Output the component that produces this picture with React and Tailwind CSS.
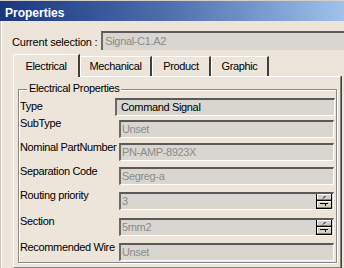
import React from "react";

const Spinner = () => (
  <svg width="16" height="16" viewBox="0 0 16 16" className="shrink-0 mr-[1px] -mt-[1px]">
    <rect x="0" y="0" width="16" height="16" fill="#000" />
    <rect x="1" y="1" width="14" height="6" fill="#d4d0c8" />
    <path d="M1 1.5H15M1.5 1V7" stroke="#fff" strokeWidth="1" />
    <path d="M1 6.5H15" stroke="#808080" strokeWidth="1" />
    <rect x="1" y="8" width="14" height="7" fill="#d4d0c8" />
    <path d="M1 8.5H15M1.5 8V15" stroke="#fff" strokeWidth="1" />
    <path d="M1 14.5H15" stroke="#808080" strokeWidth="1" />
    <path d="M7 5.5L9.5 3" stroke="#000" strokeWidth="1" />
    <path d="M4 10.5H12M9.5 11V13" stroke="#000" strokeWidth="1" />
  </svg>
);

const boxBase =
  "flex items-start h-[18px] bg-[#d8d6cf] border-t-2 border-l-2 border-b border-r border-t-[#5a5a5a] border-l-[#6a6a6a] border-b-white border-r-white leading-[15px] text-[#8c8c8c] overflow-hidden";

function Row({ label, labelClass, rowClass, boxClass, value, spin }) {
  return (
    <div className={"flex items-start " + rowClass}>
      <div className={"w-[98px] pl-[1px] leading-[14px] whitespace-nowrap " + labelClass}>{label}</div>
      <div className={boxBase + " " + boxClass}>
        <span className="flex-1 pl-[1px] whitespace-nowrap">{value}</span>
        {spin && <Spinner />}
      </div>
    </div>
  );
}

export default function App() {
  return (
    <div className="w-[344px] h-[268px] overflow-hidden bg-[#ede4da] flex flex-col font-['Liberation_Sans',Arial,sans-serif] text-[11px] tracking-[-0.35px] text-black shadow-[inset_1px_0_0_#c8c4bc,inset_2px_0_0_#fff]">
      {/* Title bar */}
      <div className="h-[21px] shrink-0 bg-linear-to-r from-[#1a3680] via-[#5070ae] to-[#a0c2ec] border-t border-t-[#d4d0c8] pl-[5px] pt-[4px]">
        <span className="text-white font-bold text-[12px] leading-[14px] tracking-normal">Properties</span>
      </div>

      {/* Current selection */}
      <div className="flex items-start mt-[10px] pl-[12px] shrink-0">
        <div className="w-[92px] mt-[4px] leading-[14px] whitespace-nowrap tracking-[-0.2px]">Current selection :</div>
        <div className="w-[250px] h-[19px] bg-[#d8d6cf] border-t-2 border-l-2 border-t-[#5a5a5a] border-l-[#6a6a6a] pl-[2px] leading-[16px] text-[#8c8c8c]">
          Signal-C1.A2
        </div>
      </div>

      {/* Tabs */}
      <div className="flex items-end h-[22px] mt-[4px] pl-[13px] shrink-0">
        <div className="relative z-10 w-[67px] h-[23px] -mb-[1px] bg-[#ede4da] border-l border-t border-l-white border-t-white border-r-2 border-r-[#404040] pt-[4px] text-center leading-[14px] rounded-tl-[2px]">
          Electrical
        </div>
        <div className="w-[72px] h-[20px] border-l border-t border-l-white border-t-white border-r-2 border-r-[#404040] pt-[2px] text-center leading-[14px]">
          Mechanical
        </div>
        <div className="w-[59px] h-[20px] border-l border-t border-l-white border-t-white border-r-2 border-r-[#404040] pt-[2px] text-center leading-[14px]">
          Product
        </div>
        <div className="w-[58px] h-[20px] border-l border-t border-l-white border-t-white border-r-2 border-r-[#404040] pt-[2px] text-center leading-[14px]">
          Graphic
        </div>
      </div>

      {/* Tab panel */}
      <div className="ml-[13px] w-[328px] flex-1 border-t border-l border-t-white border-l-white border-r border-r-[#808080] border-b border-b-[#808080] shadow-[1px_0_0_#404040] pl-[4px] pt-[12px]">
        <div className="relative w-[319px] h-[174px] border border-[#8a8a8a] shadow-[inset_1px_1px_0_#fff,1px_1px_0_#fff] pt-[8px]">
          <span className="absolute -top-[9px] left-[8px] px-[2px] bg-[#ede4da] leading-[14px] whitespace-nowrap">
            Electrical Properties
          </span>

          <Row
            label="Type"
            labelClass="mt-[1px]"
            rowClass=""
            boxClass="w-[220px] -ml-[2px] text-black pl-[3px]"
            value="Command Signal"
          />
          <Row
            label="SubType"
            labelClass="-mt-[4px]"
            rowClass="mt-[4px]"
            boxClass="w-[215px] ml-[2px]"
            value="Unset"
          />
          <Row
            label="Nominal PartNumber"
            labelClass="-mt-[3px]"
            rowClass="mt-[5px]"
            boxClass="w-[215px] ml-[2px]"
            value="PN-AMP-8923X"
          />
          <Row
            label="Separation Code"
            labelClass="-mt-[3px]"
            rowClass="mt-[6px]"
            boxClass="w-[215px] ml-[2px]"
            value="Segreg-a"
          />
          <Row
            label="Routing priority"
            labelClass="-mt-[4px]"
            rowClass="mt-[7px]"
            boxClass="w-[215px] ml-[2px]"
            value="3"
            spin
          />
          <Row
            label="Section"
            labelClass="-mt-[4px]"
            rowClass="mt-[8px]"
            boxClass="w-[215px] ml-[2px]"
            value="5mm2"
            spin
          />
          <Row
            label="Recommended Wire"
            labelClass="-mt-[3px]"
            rowClass="mt-[7px]"
            boxClass="w-[215px] ml-[2px]"
            value="Unset"
          />
        </div>
      </div>
    </div>
  );
}
